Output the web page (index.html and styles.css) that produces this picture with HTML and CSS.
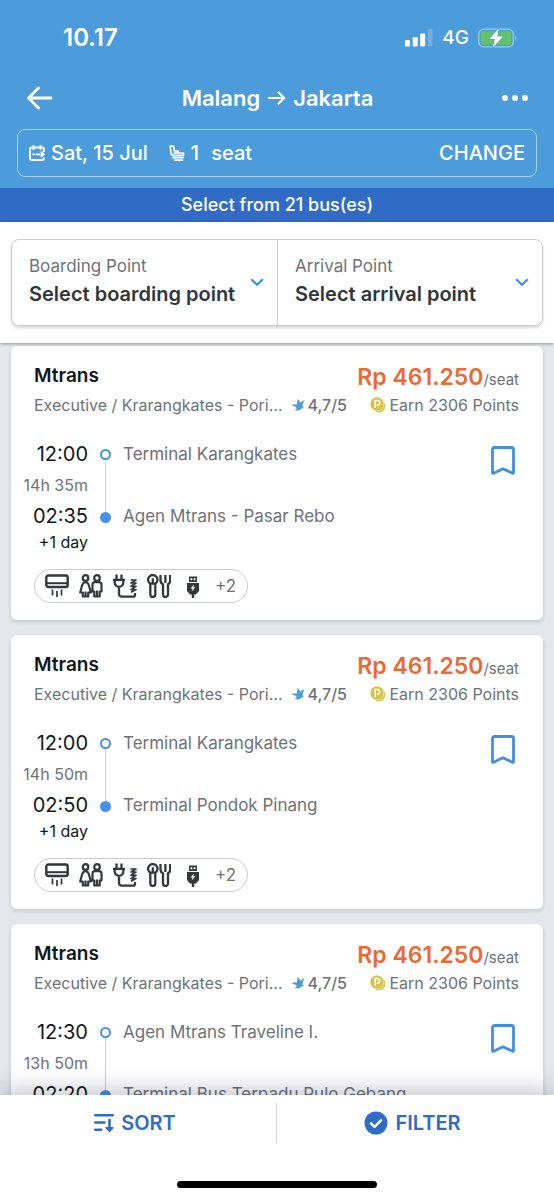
FILE: index.html
```html
<!DOCTYPE html>
<html lang="en">
<head>
<meta charset="utf-8">
<meta name="viewport" content="width=device-width, initial-scale=1">
<title>Malang → Jakarta</title>
<link rel="stylesheet" href="styles.css">
</head>
<body>
<svg class="sprite" aria-hidden="true">
  <symbol id="bookmark" viewBox="0 0 24 29"><path d="M3.500 1.500h17a2 2 0 0 1 2 2V26.500q0 1.200-1 .8L12 22.800 2.500 27.300q-1 .4-1-.8V3.500a2 2 0 0 1 2-2z" fill="none" stroke="currentColor" stroke-width="2.800" stroke-linejoin="round"/></symbol>
  <symbol id="bird" viewBox="0 0 14 14"><path d="M.5 7.500C2 6 3.500 5.800 5.500 6.800 6.300 5 6.500 3 6.200 1 8 2 8.800 3.200 9.200 4.800 10.500 3.500 12 2.800 13.600 2.500 12.500 4 12 5.500 11.600 7.200 11.500 8.500 12 9.300 13.200 10.200 11.500 10 10.500 10.500 9.500 11.500 7.500 13 5 12.800 3.200 11.800 5 11.500 5.800 10.800 5.500 9.800 4.500 8.500 3 7.500.5 7.500z" fill="#4a9fdb"/></symbol>
  <symbol id="coin" viewBox="0 0 16 16"><circle cx="9" cy="9" r="6.500" fill="#d8c95c"/><circle cx="7" cy="7" r="7" fill="#fff"/><circle cx="7" cy="7" r="6.700" fill="#d8c24e"/><path d="M5.200 11V3.500h2.300a2.200 2.200 0 0 1 0 4.400H6.800" fill="none" stroke="#fff" stroke-width="1.500"/></symbol>
  <symbol id="ac" viewBox="0 0 24 24"><rect x="1.300" y="1.500" width="21.400" height="11.500" rx="2" fill="none" stroke="currentColor" stroke-width="2.400"/><path d="M1.500 9.200h21" stroke="currentColor" stroke-width="2"/><path d="M7.500 15.500v6M12 17v6M16.500 15.500v6" stroke="currentColor" stroke-width="1.700"/></symbol>
  <symbol id="toilet" viewBox="0 0 24 24"><g fill="none" stroke="currentColor" stroke-width="2.200" stroke-linejoin="round"><circle cx="6.500" cy="4" r="2.800"/><circle cx="18" cy="4" r="2.800"/><path d="M6.500 8.200C4 8.200 3.200 10.500 2.500 13.500L1.200 18.500H3.800V22.500H9.200V18.500H11.800L10.500 13.500C9.800 10.500 9 8.200 6.500 8.200zM6.500 17.500v5M16 8.200h4a2.500 2.500 0 0 1 2.500 2.500V17.500H20.700V22.500H15.300V17.500H13.500v-6.800A2.500 2.500 0 0 1 16 8.200zM18 16.500v6"/></g></symbol>
  <symbol id="plug" viewBox="0 0 24 24"><g fill="none" stroke="currentColor" stroke-width="2.300"><path d="M3.500.5v5M8.500.5v5M0 5.800h12M1.700 5.800v2.700a4.300 4.300 0 0 0 8.600 0V5.800M6 12.500v7.500a2.700 2.700 0 0 0 2.700 2.700H20a2 2 0 0 0 2-2V19"/><path d="M17.500 6h5.500l-5 3h5l-5 3.300h5l-5 3.300h5l-5 2.600" stroke-width="1.700" stroke-linejoin="round"/></g></symbol>
  <symbol id="meal" viewBox="0 0 24 24"><g fill="none" stroke="currentColor" stroke-width="2.300" stroke-linejoin="round"><path d="M3.300 9.700a4.700 4.700 0 1 1 5 0M3.300 9.500V20.500a2.500 2.500 0 0 0 5 0V9.500M5.800 4.200v5.500H3.300h5M13.500 1v5.500a4 4 0 0 0 2.500 3.700v10.300a2.500 2.500 0 0 0 5 0V10.200a4 4 0 0 0 2.200-3.700V1M18.400 1v8"/></g></symbol>
  <symbol id="usb" viewBox="0 0 24 24"><path d="M8 2.500h8V8H8zM6 9h12v8l-3 3.500H9L6 17z" fill="currentColor"/><path d="M12 19v5" stroke="currentColor" stroke-width="2.400"/><path d="M9.500 4.300h1.800v2H9.500zM12.700 4.300h1.800v2h-1.800zM13 10.500l-3.500 4h2l-.8 3 3.700-4.200h-2z" fill="#fff"/></symbol>
  <symbol id="chevron" viewBox="0 0 14 8"><path d="M1.200 1.200 7 6.700l5.800-5.500" fill="none" stroke="currentColor" stroke-width="2.200"/></symbol>
</svg>

<header class="header">
  <div class="status">
    <span class="clock">10.17</span>
    <span class="signals">
      <svg class="bars" viewBox="0 0 28 18"><g fill="#fff"><rect x="0" y="11" width="5" height="6.500" rx="1.300"/><rect x="7.700" y="8" width="5" height="9.500" rx="1.300"/><rect x="15.200" y="4.500" width="5" height="13" rx="1.300"/><rect x="22.800" y="0" width="4.600" height="17.500" rx="1.300" opacity=".2"/></g></svg>
      <span class="network">4G</span>
      <svg class="battery" viewBox="0 0 39 20"><rect x=".7" y="1.200" width="34.600" height="17.600" rx="5" fill="none" stroke="#9ccbef" stroke-width="1.300"/><rect x="2.700" y="3.200" width="30.600" height="13.600" rx="3" fill="#62c466"/><path d="M37 7.500c1.700.700 1.700 4.300 0 5z" fill="#9ccbef"/><path d="M20.500.5 11.500 11h5.300L15 19.500 25 8.500h-5.500z" fill="#fff" stroke="#4c9bda" stroke-width="1.200" paint-order="stroke"/></svg>
    </span>
  </div>
  <nav class="nav">
    <button class="icon-button" aria-label="Back"><svg class="back" viewBox="0 0 27 24"><path d="M12.500 2 2.500 12l10 10M2.500 12H25" fill="none" stroke="#fff" stroke-width="2.800" stroke-linecap="round" stroke-linejoin="round"/></svg></button>
    <h1 class="route">Malang <svg class="arrow" viewBox="0 0 20 16" aria-label="to"><path d="M1 8h17M11.500 1.500 18 8l-6.500 6.500" fill="none" stroke="#fff" stroke-width="2.300"/></svg> Jakarta</h1>
    <button class="icon-button" aria-label="More"><svg class="more" viewBox="0 0 26 6"><g fill="#fff"><circle cx="3" cy="3" r="3"/><circle cx="13" cy="3" r="3"/><circle cx="23" cy="3" r="3"/></g></svg></button>
  </nav>
  <div class="trip">
    <svg class="trip-icon" viewBox="0 0 16 16"><g fill="none" stroke="#fff" stroke-width="1.800"><path d="M15 7V4a1.500 1.500 0 0 0-1.500-1.500h-11A1.500 1.500 0 0 0 1 4v9.500A1.500 1.500 0 0 0 2.500 15h11a1.500 1.500 0 0 0 1.500-1.500v-1M4.500 0v5M11.500 0v5M3.500 9.300H6M7 9.300h8M12 6.500l2.800 2.800-2.800 2.800"/></g></svg>
    <span class="trip-date">Sat, 15 Jul</span>
    <svg class="trip-icon" viewBox="0 0 16 16"><path d="M1.200 1.200h3.300l.8 4.600H9V8H14.500v2.300H4.500A2.400 2.400 0 0 1 2 8.200zM4.500 8H9M3 12.700h12M5 15.200h9" fill="none" stroke="#fff" stroke-width="1.700" stroke-linejoin="round"/></svg>
    <span>1</span><span>seat</span>
    <button class="change">CHANGE</button>
  </div>
</header>
<div class="banner">Select from 21 bus(es)</div>

<section class="points">
  <div class="points-box">
    <div class="point">
      <div class="point-text"><label for="boarding">Boarding Point</label><select id="boarding"><option>Select boarding point</option></select></div>
      <svg class="chevron"><use href="#chevron"/></svg>
    </div>
    <div class="point">
      <div class="point-text"><label for="arrival">Arrival Point</label><select id="arrival"><option>Select arrival point</option></select></div>
      <svg class="chevron"><use href="#chevron"/></svg>
    </div>
  </div>
</section>

<main class="results">
  <article class="card">
    <div class="row top"><h2>Mtrans</h2><p class="price"><strong>Rp 461.250</strong>/seat</p></div>
    <div class="row info"><span>Executive / Krarangkates - Pori…</span><span class="rating"><svg class="bird"><use href="#bird"/></svg>4,7/5</span><span class="earn"><svg class="coin"><use href="#coin"/></svg>Earn 2306 Points</span></div>
    <div class="journey">
      <div class="times"><time>12:00</time><span class="duration">14h 35m</span><time>02:35</time><span class="day">+1 day</span></div>
      <div class="track"><i class="ring"></i><i class="line"></i><i class="dot"></i></div>
      <div class="stops"><span>Terminal Karangkates</span><span>Agen Mtrans - Pasar Rebo</span></div>
      <button class="save" aria-label="Save"><svg class="bookmark"><use href="#bookmark"/></svg></button>
    </div>
    <button class="amenities" aria-label="Amenities"><svg><use href="#ac"/></svg><svg><use href="#toilet"/></svg><svg><use href="#plug"/></svg><svg><use href="#meal"/></svg><svg><use href="#usb"/></svg><span>+2</span></button>
  </article>
  <article class="card">
    <div class="row top"><h2>Mtrans</h2><p class="price"><strong>Rp 461.250</strong>/seat</p></div>
    <div class="row info"><span>Executive / Krarangkates - Pori…</span><span class="rating"><svg class="bird"><use href="#bird"/></svg>4,7/5</span><span class="earn"><svg class="coin"><use href="#coin"/></svg>Earn 2306 Points</span></div>
    <div class="journey">
      <div class="times"><time>12:00</time><span class="duration">14h 50m</span><time>02:50</time><span class="day">+1 day</span></div>
      <div class="track"><i class="ring"></i><i class="line"></i><i class="dot"></i></div>
      <div class="stops"><span>Terminal Karangkates</span><span>Terminal Pondok Pinang</span></div>
      <button class="save" aria-label="Save"><svg class="bookmark"><use href="#bookmark"/></svg></button>
    </div>
    <button class="amenities" aria-label="Amenities"><svg><use href="#ac"/></svg><svg><use href="#toilet"/></svg><svg><use href="#plug"/></svg><svg><use href="#meal"/></svg><svg><use href="#usb"/></svg><span>+2</span></button>
  </article>
  <article class="card">
    <div class="row top"><h2>Mtrans</h2><p class="price"><strong>Rp 461.250</strong>/seat</p></div>
    <div class="row info"><span>Executive / Krarangkates - Pori…</span><span class="rating"><svg class="bird"><use href="#bird"/></svg>4,7/5</span><span class="earn"><svg class="coin"><use href="#coin"/></svg>Earn 2306 Points</span></div>
    <div class="journey">
      <div class="times"><time>12:30</time><span class="duration">13h 50m</span><time>02:20</time></div>
      <div class="track"><i class="ring"></i><i class="line"></i><i class="dot"></i></div>
      <div class="stops"><span>Agen Mtrans Traveline I.</span><span>Terminal Bus Terpadu Pulo Gebang</span></div>
      <button class="save" aria-label="Save"><svg class="bookmark"><use href="#bookmark"/></svg></button>
    </div>
  </article>
</main>

<footer class="footer">
  <div class="actions">
    <button class="action"><svg class="sort" viewBox="0 0 20 20"><path d="M1.200 2.200h17.600M1.200 9.500h9.300M1.200 16.800h6" stroke="currentColor" stroke-width="2.400" stroke-linecap="round"/><path d="M15.500 6V17" stroke="currentColor" stroke-width="2.600"/><path d="M12.200 14.800l3.300 3.500 3.300-3.500z" fill="currentColor" stroke="currentColor" stroke-width="1.600" stroke-linejoin="round"/></svg>SORT</button>
    <button class="action"><svg class="check" viewBox="0 0 24 24"><circle cx="12" cy="12" r="11.500" fill="currentColor"/><path d="M7 12.300l3.500 3.500 6.500-6.500" fill="none" stroke="#fff" stroke-width="2.600" stroke-linecap="round" stroke-linejoin="round"/></svg>FILTER</button>
  </div>
  <div class="home-bar"></div>
</footer>
</body>
</html>
```
FILE: styles.css
```css
* { box-sizing: border-box; }
body {
  margin: 0;
  height: 100vh;
  display: flex;
  flex-direction: column;
  overflow: hidden;
  background: #e4e7eb;
  color: #12171c;
  font-family: Inter, "Liberation Sans", sans-serif;
  font-size: 16px;
}
button, select { font: inherit; color: inherit; background: none; border: 0; padding: 0; margin: 0; cursor: pointer; }
h1, h2, p { margin: 0; font-weight: 600; }
svg { flex: none; }
.sprite { display: none; }

.header { flex: none; background: #4c9bda; color: #fff; padding: 0 17px 11px; }
.status { display: flex; justify-content: space-between; align-items: center; height: 75px; padding: 0 20px 0 46px; }
.clock { font-size: 24px; font-weight: 600; }
.signals { display: flex; align-items: center; gap: 9px; }
.network { font-size: 19px; font-weight: 500; }
.bars { width: 28px; height: 18px; }
.battery { width: 39px; height: 20px; }
.nav { display: flex; justify-content: space-between; align-items: center; height: 46px; padding: 0 9px; margin-bottom: 8px; }
.icon-button { display: flex; }
.back { width: 27px; height: 24px; }
.more { width: 26px; height: 6px; }
.route { display: flex; align-items: center; gap: 7px; font-size: 22px; }
.arrow { width: 19px; height: 16px; }
.trip { display: flex; align-items: center; height: 48px; padding: 0 11px; border: 1px solid #a5d3f5; border-radius: 8px; font-size: 20px; font-weight: 500; }
.trip-icon { width: 16px; height: 16px; margin-right: 6px; }
.trip-date { margin-right: 21px; }
.trip span + span { margin-left: 12px; }
.change { margin-left: auto; font-weight: 500; }
.banner { flex: none; background: #306cc5; color: #fff; height: 34px; line-height: 34px; text-align: center; font-size: 18px; font-weight: 500; }

.points { flex: none; position: relative; background: #fff; padding: 17px 11px; box-shadow: 0 1px 3px rgba(0, 0, 0, .35); }
.points-box { display: grid; grid-template-columns: 1fr 1fr; border: 1px solid #c9cccf; border-radius: 8px; box-shadow: 0 2px 3px rgba(0, 0, 0, .16); }
.point { display: flex; align-items: center; justify-content: space-between; min-width: 0; padding: 14px 13px 15px 17px; }
.point + .point { border-left: 1px solid #c9cccf; }
.point-text { display: flex; flex-direction: column; }
.point-text label { font-size: 17px; line-height: 24px; color: #6d7278; }
.point-text select { appearance: none; font-size: 20px; line-height: 32px; height: 32px; font-weight: 600; color: #30363d; }
.chevron { width: 14px; height: 8px; color: #3d8be6; }

.results { flex: 1; min-height: 0; overflow: hidden; padding: 3px 11px; }
.card { background: #fff; border-radius: 6px; padding: 16px 0 17px; margin-bottom: 15px; box-shadow: 0 2px 4px rgba(0, 0, 0, .14); }
.row { display: flex; padding: 0 24px 0 23px; white-space: nowrap; }
.top { justify-content: space-between; height: 30px; line-height: 30px; }
.top h2 { font-size: 19px; line-height: 28px; }
.price { font-size: 15px; font-weight: 400; color: #6d7278; }
.price strong { font-size: 23px; font-weight: 600; color: #ea6a34; }
.info { align-items: center; height: 26px; font-size: 16px; color: #6d7278; }
.rating { display: flex; align-items: center; gap: 3px; margin-left: 8px; font-weight: 500; }
.bird { width: 14px; height: 14px; }
.earn { display: flex; align-items: center; gap: 3px; margin-left: auto; }
.coin { width: 16px; height: 16px; }
.journey { display: flex; gap: 12px; padding: 21px 28px 0 8px; }
.times { display: flex; flex-direction: column; width: 69px; line-height: 31px; font-size: 20px; text-align: right; white-space: nowrap; }
.duration { font-size: 16px; color: #6d7278; }
.day { font-size: 16px; line-height: 20px; }
.track { display: flex; flex-direction: column; align-items: center; width: 11px; height: 74px; margin-top: 10px; }
.ring, .dot { width: 11px; height: 11px; border-radius: 50%; border: 2px solid #4690ea; }
.dot { background: #4690ea; }
.line { flex: 1; width: 1px; background: #c9cccf; }
.stops { display: flex; flex-direction: column; gap: 31px; flex: 1; line-height: 31px; font-size: 17px; color: #6d7278; white-space: nowrap; }
.save { display: flex; align-self: flex-start; margin-top: 7px; }
.bookmark { width: 24px; height: 29px; color: #438fe3; }
.amenities { display: flex; align-items: center; gap: 10px; height: 34px; margin: 17px 0 0 23px; padding: 0 11px 0 10px; border: 1px solid #c9cccf; border-radius: 17px; color: #34373b; }
.amenities svg { width: 24px; height: 24px; }
.amenities span { font-size: 17px; color: #6d7278; }

.footer { flex: none; position: relative; background: #fff; height: 105px; padding: 8px 0 12px; display: flex; flex-direction: column; align-items: center; justify-content: space-between; box-shadow: 0 -4px 22px rgba(20, 20, 50, .26); }
.actions { display: grid; grid-template-columns: 1fr 1fr; width: 100%; }
.action { display: flex; align-items: center; justify-content: center; gap: 7px; height: 40px; padding-right: 6px; font-size: 20px; font-weight: 600; color: #306cc5; }
.action:first-child { border-right: 1px solid #d4d6d9; }
.sort { width: 20px; height: 20px; }
.check { width: 24px; height: 24px; }
.home-bar { width: 36%; height: 7px; border-radius: 4px; background: #000; }
```
